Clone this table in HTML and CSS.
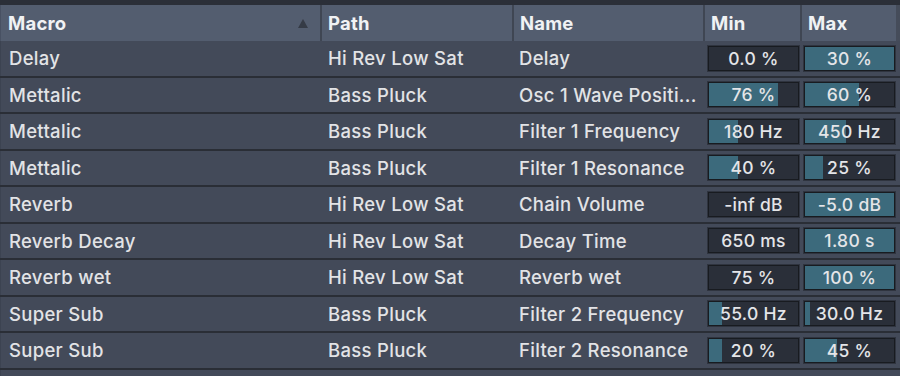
FILE: index.html
```html
<!DOCTYPE html>
<html>
<head>
<meta charset="utf-8">
<link rel="stylesheet" href="styles.css">
</head>
<body>
<div class="table">
  <div class="head">
    <div class="hc c-macro">Macro<span class="sort"></span></div>
    <div class="hc c-path">Path</div>
    <div class="hc c-name">Name</div>
    <div class="hc c-min">Min</div>
    <div class="hc c-max">Max</div>
    <div class="hc c-end"></div>
  </div>

  <div class="row">
    <div class="cell c-macro">Delay</div>
    <div class="cell c-path">Hi Rev Low Sat</div>
    <div class="cell c-name">Delay</div>
    <div class="cell c-min"><div class="val"><div class="fill" style="width:0%"></div><span>0.0 %</span></div></div>
    <div class="cell c-max"><div class="val"><div class="fill" style="width:100%"></div><span>30 %</span></div></div>
  </div>
  <div class="row">
    <div class="cell c-macro">Mettalic</div>
    <div class="cell c-path">Bass Pluck</div>
    <div class="cell c-name">Osc 1 Wave Positi...</div>
    <div class="cell c-min"><div class="val"><div class="fill" style="width:77%"></div><span>76 %</span></div></div>
    <div class="cell c-max"><div class="val"><div class="fill" style="width:61%"></div><span>60 %</span></div></div>
  </div>
  <div class="row">
    <div class="cell c-macro">Mettalic</div>
    <div class="cell c-path">Bass Pluck</div>
    <div class="cell c-name">Filter 1 Frequency</div>
    <div class="cell c-min"><div class="val"><div class="fill" style="width:33%"></div><span>180 Hz</span></div></div>
    <div class="cell c-max"><div class="val"><div class="fill" style="width:46%"></div><span>450 Hz</span></div></div>
  </div>
  <div class="row">
    <div class="cell c-macro">Mettalic</div>
    <div class="cell c-path">Bass Pluck</div>
    <div class="cell c-name">Filter 1 Resonance</div>
    <div class="cell c-min"><div class="val"><div class="fill" style="width:33%"></div><span>40 %</span></div></div>
    <div class="cell c-max"><div class="val"><div class="fill" style="width:20%"></div><span>25 %</span></div></div>
  </div>
  <div class="row">
    <div class="cell c-macro">Reverb</div>
    <div class="cell c-path">Hi Rev Low Sat</div>
    <div class="cell c-name">Chain Volume</div>
    <div class="cell c-min"><div class="val"><div class="fill" style="width:0%"></div><span>-inf dB</span></div></div>
    <div class="cell c-max"><div class="val"><div class="fill" style="width:100%"></div><span>-5.0 dB</span></div></div>
  </div>
  <div class="row">
    <div class="cell c-macro">Reverb Decay</div>
    <div class="cell c-path">Hi Rev Low Sat</div>
    <div class="cell c-name">Decay Time</div>
    <div class="cell c-min"><div class="val"><div class="fill" style="width:0%"></div><span>650 ms</span></div></div>
    <div class="cell c-max"><div class="val"><div class="fill" style="width:100%"></div><span>1.80 s</span></div></div>
  </div>
  <div class="row">
    <div class="cell c-macro">Reverb wet</div>
    <div class="cell c-path">Hi Rev Low Sat</div>
    <div class="cell c-name">Reverb wet</div>
    <div class="cell c-min"><div class="val"><div class="fill" style="width:0%"></div><span>75 %</span></div></div>
    <div class="cell c-max"><div class="val"><div class="fill" style="width:100%"></div><span>100 %</span></div></div>
  </div>
  <div class="row">
    <div class="cell c-macro">Super Sub</div>
    <div class="cell c-path">Bass Pluck</div>
    <div class="cell c-name">Filter 2 Frequency</div>
    <div class="cell c-min"><div class="val"><div class="fill" style="width:15%"></div><span>55.0 Hz</span></div></div>
    <div class="cell c-max"><div class="val"><div class="fill" style="width:6%"></div><span>30.0 Hz</span></div></div>
  </div>
  <div class="row">
    <div class="cell c-macro">Super Sub</div>
    <div class="cell c-path">Bass Pluck</div>
    <div class="cell c-name">Filter 2 Resonance</div>
    <div class="cell c-min"><div class="val"><div class="fill" style="width:15%"></div><span>20 %</span></div></div>
    <div class="cell c-max"><div class="val"><div class="fill" style="width:36%"></div><span>45 %</span></div></div>
  </div>
  <div class="row row-last"></div>
</div>
</body>
</html>
```

FILE: styles.css
```css
html, body {
  margin: 0;
  padding: 0;
  background: #2b2f38;
  width: 900px;
  height: 376px;
  overflow: hidden;
}

.table {
  box-sizing: border-box;
  height: 376px;
  overflow: hidden;
  padding-top: 5px;
  font-family: Inter, "Open Sans", sans-serif;
  font-size: 18.5px;
  font-weight: 500;
  letter-spacing: 0.3px;
  color: #e2e3e6;
}

.head {
  display: grid;
  grid-template-columns: 320px 192px 191px 97px 96px 4px;
  height: 36px;
  background: #535d6f;
  box-shadow: inset 1px 0 0 #485163;
}

.hc {
  display: flex;
  align-items: center;
  padding-left: 6px;
  font-weight: 700;
  font-size: 18.5px;
  letter-spacing: 0.2px;
  color: #f1f2f4;
  border-left: 2px solid #3f4653;
}

.head .c-macro {
  border-left: none;
  padding-left: 8px;
  padding-right: 12px;
  justify-content: space-between;
}

.head .c-end {
  background: #454c5a;
  padding: 0;
  border-left: none;
}

.sort {
  width: 0;
  height: 0;
  border-left: 5px solid transparent;
  border-right: 5px solid transparent;
  border-bottom: 9px solid #353b46;
}

.row {
  display: grid;
  grid-template-columns: 320px 192px 191px 97px 96px 4px;
  height: 34.5px;
  border-bottom: 2px solid #2a2e36;
  background: #434a59;
  box-shadow: inset 1px 0 0 #3c4351;
}

.row-last {
  height: 10px;
  border-bottom: none;
}

.cell {
  display: flex;
  align-items: center;
  padding-left: 8px;
  white-space: nowrap;
  overflow: hidden;
}

.row .c-macro { padding-left: 9px; }
.row .c-path { padding-left: 8px; }
.row .c-name { padding-left: 7px; }
.row .c-min { padding-left: 5px; }
.row .c-max { padding-left: 4px; }

.val {
  position: relative;
  box-sizing: border-box;
  width: 91px;
  height: 25px;
  background: #2a2f39;
  border: 1px solid #181b20;
  box-shadow: 0 0 0 1px rgba(24, 27, 32, 0.45);
  display: flex;
  align-items: center;
  justify-content: center;
  font-size: 17.5px;
}

.fill {
  position: absolute;
  left: 0;
  top: 0;
  bottom: 0;
  background: #3c6a7c;
}

.val span {
  position: relative;
  color: #e4e5e8;
}
```
